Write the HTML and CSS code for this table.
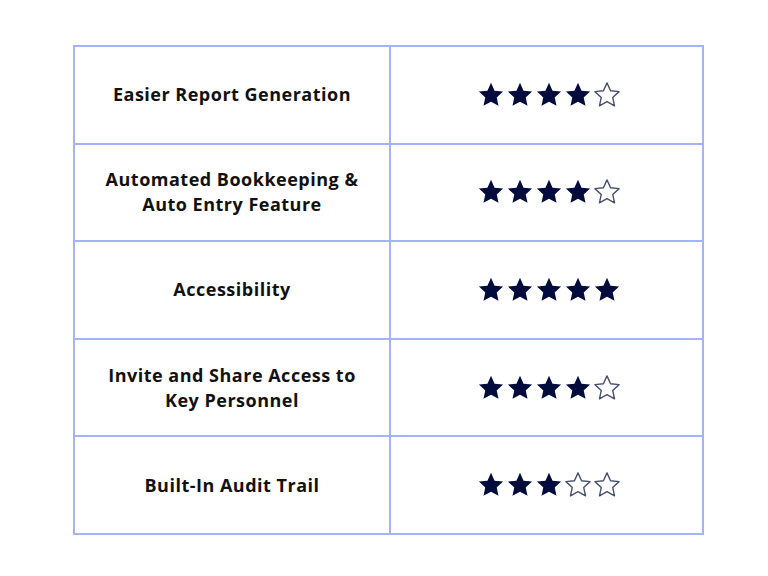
FILE: index.html
```html
<!DOCTYPE html>
<html>
<head>
<meta charset="utf-8">
<link rel="stylesheet" href="styles.css">
</head>
<body>
<svg width="0" height="0" class="defs">
  <defs>
    <path id="star" d="M12 1.6l3.05 6.7 7.3.8-5.45 5 1.55 7.2L12 17.7l-6.45 3.6 1.55-7.2-5.45-5 7.3-.8z"/>
  </defs>
</svg>
<table class="ratings">
  <tr>
    <td class="feature">Easier Report Generation</td>
    <td class="stars">
      <svg class="star full" viewBox="0 0 24 24"><use href="#star"/></svg><svg class="star full" viewBox="0 0 24 24"><use href="#star"/></svg><svg class="star full" viewBox="0 0 24 24"><use href="#star"/></svg><svg class="star full" viewBox="0 0 24 24"><use href="#star"/></svg><svg class="star empty" viewBox="0 0 24 24"><use href="#star"/></svg>
    </td>
  </tr>
  <tr>
    <td class="feature">Automated Bookkeeping &amp;<br>Auto Entry Feature</td>
    <td class="stars">
      <svg class="star full" viewBox="0 0 24 24"><use href="#star"/></svg><svg class="star full" viewBox="0 0 24 24"><use href="#star"/></svg><svg class="star full" viewBox="0 0 24 24"><use href="#star"/></svg><svg class="star full" viewBox="0 0 24 24"><use href="#star"/></svg><svg class="star empty" viewBox="0 0 24 24"><use href="#star"/></svg>
    </td>
  </tr>
  <tr>
    <td class="feature">Accessibility</td>
    <td class="stars">
      <svg class="star full" viewBox="0 0 24 24"><use href="#star"/></svg><svg class="star full" viewBox="0 0 24 24"><use href="#star"/></svg><svg class="star full" viewBox="0 0 24 24"><use href="#star"/></svg><svg class="star full" viewBox="0 0 24 24"><use href="#star"/></svg><svg class="star full" viewBox="0 0 24 24"><use href="#star"/></svg>
    </td>
  </tr>
  <tr>
    <td class="feature">Invite and Share Access to<br>Key Personnel</td>
    <td class="stars">
      <svg class="star full" viewBox="0 0 24 24"><use href="#star"/></svg><svg class="star full" viewBox="0 0 24 24"><use href="#star"/></svg><svg class="star full" viewBox="0 0 24 24"><use href="#star"/></svg><svg class="star full" viewBox="0 0 24 24"><use href="#star"/></svg><svg class="star empty" viewBox="0 0 24 24"><use href="#star"/></svg>
    </td>
  </tr>
  <tr>
    <td class="feature">Built-In Audit Trail</td>
    <td class="stars">
      <svg class="star full" viewBox="0 0 24 24"><use href="#star"/></svg><svg class="star full" viewBox="0 0 24 24"><use href="#star"/></svg><svg class="star full" viewBox="0 0 24 24"><use href="#star"/></svg><svg class="star empty" viewBox="0 0 24 24"><use href="#star"/></svg><svg class="star empty" viewBox="0 0 24 24"><use href="#star"/></svg>
    </td>
  </tr>
</table>
</body>
</html>
```
FILE: styles.css
```css
html, body {
  margin: 0;
  padding: 0;
  background: #ffffff;
}
body {
  padding: 45px 0 0 73px;
  font-family: "Open Sans", "Noto Sans", sans-serif;
}
.defs {
  position: absolute;
}
.ratings {
  border-collapse: collapse;
  width: 631px;
  border: 2px solid #a4b4fc;
}
.ratings td {
  border: 2px solid #a4b4fc;
  height: 95.6px;
  padding: 0;
  text-align: center;
  vertical-align: middle;
}
.feature {
  width: 314px;
  font-weight: 700;
  font-size: 18px;
  line-height: 25px;
  letter-spacing: 0.5px;
  color: #111111;
}
.stars {
  font-size: 0;
  padding-left: 4px !important;
}
.star {
  width: 28px;
  height: 28px;
  margin: 0 0.5px;
}
.star.full use {
  fill: #010c3d;
}
.star.empty use {
  fill: none;
  stroke: #47506e;
  stroke-width: 1.2;
  stroke-linejoin: round;
}
```
